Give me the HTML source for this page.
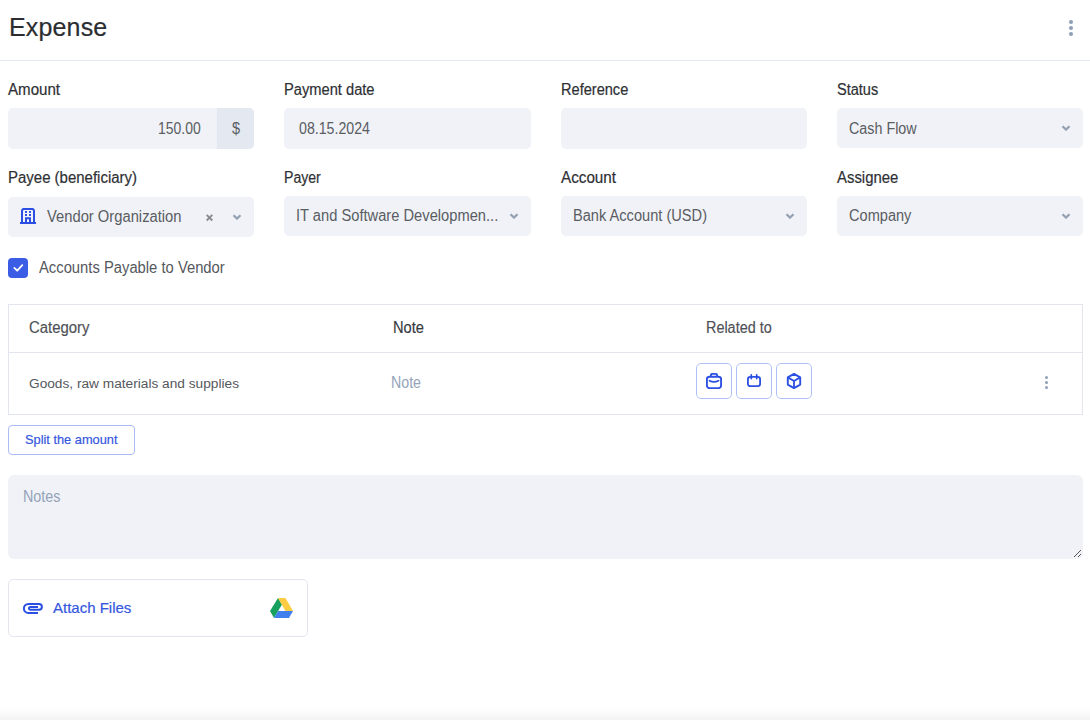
<!DOCTYPE html>
<html><head><meta charset="utf-8">
<style>
*{box-sizing:border-box;margin:0;padding:0}
html,body{width:1090px;height:720px;overflow:hidden;background:#fff}
body{font-family:"Liberation Sans",sans-serif;color:#333;position:relative}
.a{position:absolute;white-space:nowrap}
.title{left:9px;top:12px;font-size:25px;line-height:30px;letter-spacing:0.15px;color:#2b2d31;-webkit-text-stroke:0.2px #2b2d31}
.hr{left:0;top:60px;width:1090px;height:1px;background:#e3e7ef}
.lbl{font-size:16px;line-height:18px;transform:scaleX(.925);transform-origin:0 0;color:#2e3034;-webkit-text-stroke:0.2px #2e3034}
.inp{background:#f0f2f7;border-radius:5px;height:40px}
.val{font-size:15.6px;line-height:18px;transform:scaleX(.93);transform-origin:0 0;color:#5a5d62}
.chev{width:10px;height:6px}
.tbl{left:8px;top:304px;width:1075px;height:111px;border:1px solid #e2e5f0}
.th{font-size:15.6px;line-height:18px;transform-origin:0 0;color:#4e5156;-webkit-text-stroke:0.15px #4e5156}
.rbtn{width:36px;height:36px;border:1px solid #b1c2f6;border-radius:5px;background:#fff}
.rbtn svg{position:absolute;left:9px;top:9px}
</style></head><body>
<div class="a title">Expense</div>
<svg class="a" style="left:1067px;top:18px" width="8" height="20" viewBox="0 0 8 20"><circle cx="4" cy="4" r="2" fill="#8e9fb7"/><circle cx="4" cy="10" r="2" fill="#8e9fb7"/><circle cx="4" cy="16" r="2" fill="#8e9fb7"/></svg>
<div class="a hr"></div>

<!-- row 1 -->
<div class="a lbl" style="left:8px;top:81px;transform:scaleX(0.943)">Amount</div>
<div class="a inp" style="left:8px;top:108px;width:246px;height:41px"></div>
<div class="a" style="left:217px;top:108px;width:37px;height:41px;background:#e4e8f1;border-radius:0 5px 5px 0"></div>
<div class="a val" style="left:158px;top:120px;transform:scaleX(0.895)">150.00</div>
<div class="a val" style="left:232px;top:120px;color:#5a5d62">$</div>

<div class="a lbl" style="left:284px;top:81px;transform:scaleX(0.917)">Payment date</div>
<div class="a inp" style="left:284px;top:108px;width:247px;height:41px"></div>
<div class="a val" style="left:299px;top:120px;transform:scaleX(0.909)">08.15.2024</div>

<div class="a lbl" style="left:561px;top:81px;transform:scaleX(0.911)">Reference</div>
<div class="a inp" style="left:561px;top:108px;width:246px;height:41px"></div>

<div class="a lbl" style="left:837px;top:81px;transform:scaleX(0.908)">Status</div>
<div class="a inp" style="left:837px;top:108px;width:246px"></div>
<div class="a val" style="left:849px;top:120px;transform:scaleX(0.918)">Cash Flow</div>
<svg class="a chev" style="left:1061px;top:125px" viewBox="0 0 10 6"><path d="M1.5 1.2 L5 4.6 L8.5 1.2" stroke="#93a0b1" stroke-width="2.2" fill="none"/></svg>

<!-- row 2 -->
<div class="a lbl" style="left:8px;top:169px;transform:scaleX(0.936)">Payee (beneficiary)</div>
<div class="a inp" style="left:8px;top:197px;width:246px"></div>
<svg class="a" style="left:20px;top:208px" width="16" height="16" viewBox="0 0 16 16"><path d="M2 14.5V2.4L3.2 1H12.8L14 2.4V14.5" stroke="#2b4fe3" stroke-width="2" fill="none"/><rect x="0" y="14" width="16" height="2" fill="#2b4fe3"/><rect x="5" y="3" width="2" height="1.9" fill="#2b4fe3"/><rect x="9" y="3" width="2" height="1.9" fill="#2b4fe3"/><rect x="5" y="6" width="2" height="2" fill="#2b4fe3"/><rect x="9" y="6" width="2" height="2" fill="#2b4fe3"/><path d="M6 14.5V10.2H10V14.5" stroke="#2b4fe3" stroke-width="2" fill="none"/></svg>
<div class="a val" style="left:47px;top:208px;transform:scaleX(0.946)">Vendor Organization</div>
<svg class="a" style="left:205px;top:213px" width="9" height="9" viewBox="0 0 9 9"><path d="M1.7 1.9L7.3 7.5M7.3 1.9L1.7 7.5" stroke="#8a8b8e" stroke-width="1.9"/></svg>
<svg class="a chev" style="left:232px;top:214px" viewBox="0 0 10 6"><path d="M1.5 1.2 L5 4.6 L8.5 1.2" stroke="#93a0b1" stroke-width="2.2" fill="none"/></svg>

<div class="a lbl" style="left:284px;top:169px;transform:scaleX(0.880)">Payer</div>
<div class="a inp" style="left:284px;top:196px;width:247px"></div>
<div class="a val" style="left:296px;top:207px;transform:scaleX(0.942)">IT and Software Developmen...</div>
<svg class="a chev" style="left:509px;top:213px" viewBox="0 0 10 6"><path d="M1.5 1.2 L5 4.6 L8.5 1.2" stroke="#93a0b1" stroke-width="2.2" fill="none"/></svg>

<div class="a lbl" style="left:561px;top:169px;transform:scaleX(0.952)">Account</div>
<div class="a inp" style="left:561px;top:196px;width:246px"></div>
<div class="a val" style="left:573px;top:207px;transform:scaleX(0.937)">Bank Account (USD)</div>
<svg class="a chev" style="left:785px;top:213px" viewBox="0 0 10 6"><path d="M1.5 1.2 L5 4.6 L8.5 1.2" stroke="#93a0b1" stroke-width="2.2" fill="none"/></svg>

<div class="a lbl" style="left:837px;top:169px;transform:scaleX(0.932)">Assignee</div>
<div class="a inp" style="left:837px;top:196px;width:246px"></div>
<div class="a val" style="left:849px;top:207px;transform:scaleX(0.935)">Company</div>
<svg class="a chev" style="left:1061px;top:213px" viewBox="0 0 10 6"><path d="M1.5 1.2 L5 4.6 L8.5 1.2" stroke="#93a0b1" stroke-width="2.2" fill="none"/></svg>

<!-- checkbox -->
<div class="a" style="left:8px;top:258px;width:20px;height:20px;border-radius:4px;background:#3b5ce5"></div>
<svg class="a" style="left:8px;top:258px" width="20" height="20" viewBox="0 0 20 20"><path d="M6.3 9.9L9.2 12.7L14.3 7.2" stroke="#fff" stroke-width="1.8" fill="none" stroke-linecap="round" stroke-linejoin="round"/></svg>
<div class="a val" style="left:39px;top:259px;color:#55585d;transform:scaleX(0.948)">Accounts Payable to Vendor</div>

<!-- table -->
<div class="a tbl"></div>
<div class="a" style="left:8px;top:352px;width:1075px;height:1px;background:#e2e5f0"></div>
<div class="a th" style="left:29px;top:319px;transform:scaleX(0.956)">Category</div>
<div class="a th" style="left:393px;top:319px;color:#35383d;-webkit-text-stroke:0.15px #35383d;transform:scaleX(0.938)">Note</div>
<div class="a th" style="left:706px;top:319px;transform:scaleX(0.924)">Related to</div>
<div class="a" style="left:29px;top:376px;font-size:13.7px;line-height:16px;color:#55585d">Goods, raw materials and supplies</div>
<div class="a val" style="left:391px;top:374px;color:#94a3b8;transform:scaleX(0.910)">Note</div>
<div class="a rbtn" style="left:696px;top:363px"></div>
<div class="a rbtn" style="left:736px;top:363px"></div>
<div class="a rbtn" style="left:776px;top:363px"></div>
<svg class="a" style="left:706px;top:373px" width="16" height="16" viewBox="0 0 16 16"><rect x="0.9" y="3.7" width="14.2" height="11.4" rx="2.6" stroke="#2b4fe3" stroke-width="1.9" fill="none"/><path d="M4.9 3.5V2.6Q4.9 0.9 6.2 0.9H9.8Q11.1 0.9 11.1 2.6V3.5" stroke="#2b4fe3" stroke-width="1.9" fill="none"/><path d="M3.5 7.7Q8 10.2 12.5 7.7" stroke="#2b4fe3" stroke-width="1.8" fill="none" stroke-linecap="round"/></svg>
<svg class="a" style="left:746px;top:373px" width="16" height="16" viewBox="0 0 16 16"><rect x="1.9" y="3.8" width="12.2" height="9.4" rx="2.4" stroke="#2b4fe3" stroke-width="1.8" fill="none"/><path d="M5.3 1.8V5.6M10.7 1.8V5.6" stroke="#2b4fe3" stroke-width="1.7" stroke-linecap="round"/></svg>
<svg class="a" style="left:786px;top:373px" width="16" height="16" viewBox="0 0 16 16"><path d="M8 0.9L14.2 4.4V11.6L8 15.1L1.8 11.6V4.4Z" stroke="#2b4fe3" stroke-width="1.9" fill="none" stroke-linejoin="round"/><path d="M1.8 4.4L8 8L14.2 4.4M8 8V15.1" stroke="#2b4fe3" stroke-width="1.8" fill="none"/></svg>
<svg class="a" style="left:1044px;top:375px" width="5" height="15" viewBox="0 0 5 15"><circle cx="2.5" cy="2.4" r="1.5" fill="#8e9fb7"/><circle cx="2.5" cy="7.5" r="1.5" fill="#8e9fb7"/><circle cx="2.5" cy="12.5" r="1.5" fill="#8e9fb7"/></svg>

<!-- split -->
<div class="a" style="left:8px;top:425px;width:127px;height:30px;border:1px solid #a9bcf5;border-radius:4px"></div>
<div class="a" style="left:25px;top:432px;font-size:12.8px;line-height:16px;color:#3557e0;-webkit-text-stroke:0.2px #3557e0">Split the amount</div>

<!-- notes -->
<div class="a inp" style="left:8px;top:475px;width:1075px;height:84px;border-radius:6px"></div>
<div class="a val" style="left:23px;top:488px;color:#94a3b8;transform:scaleX(0.920)">Notes</div>
<svg class="a" style="left:1073px;top:549px" width="9" height="9" viewBox="0 0 9 9"><path d="M8 1L1 8M8 5L5 8" stroke="#555" stroke-width="1"/></svg>

<!-- attach -->
<div class="a" style="left:8px;top:579px;width:300px;height:58px;border:1px solid #e3e5f0;border-radius:5px"></div>
<svg class="a" style="left:18px;top:596px" width="32" height="24" viewBox="0 0 32 24"><path d="M20 11H12.25A1.35 1.35 0 0 0 12.25 13.7H21A2.9 2.9 0 0 0 21 7.9H10.4A4.5 4.5 0 0 0 10.4 16.9H20" stroke="#2b4fe3" stroke-width="2" fill="none"/></svg>
<div class="a" style="left:53px;top:599px;font-size:15px;line-height:18px;color:#3557e0;-webkit-text-stroke:0.2px #3557e0">Attach Files</div>
<svg class="a" style="left:270px;top:597.5px" width="23" height="20" viewBox="0 0 23 20"><path d="M8 0L12 6.6L4 20L0 13Z" fill="#18a05e"/><path d="M8 0H15.5L23 13H15.4Z" fill="#fccd43"/><path d="M8.1 13H23L19 20H4Z" fill="#3f80ee"/></svg>

<div class="a" style="left:0;top:706px;width:1090px;height:14px;background:linear-gradient(to bottom,rgba(0,0,0,0),rgba(0,0,0,0.015) 45%,rgba(0,0,0,0.05))"></div>
</body></html>
